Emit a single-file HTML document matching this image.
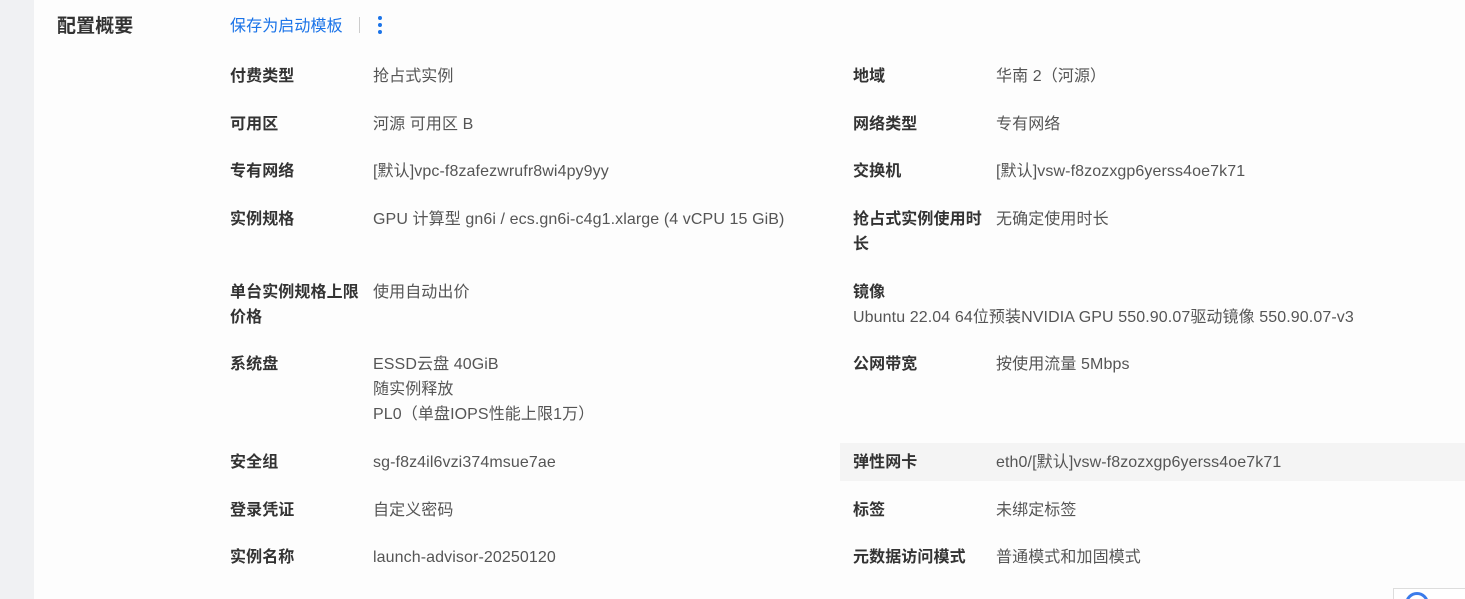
<!DOCTYPE html>
<html style="overflow:hidden"><head><meta charset="utf-8"><style>
html,body{overflow:hidden;height:599px}
body{margin:0;width:1465px;background:#fdfdfd;position:relative;font-family:"Liberation Sans","Noto Sans CJK SC",sans-serif;font-size:16px;color:#555}
.bar{position:absolute;left:0;top:0;width:34px;height:599px;background:#f0f1f3}
.t{position:absolute;white-space:nowrap;line-height:25px;margin-top:1px;letter-spacing:0.1px}
.l{font-weight:bold;color:#333}
.hl{position:absolute;left:840px;top:443px;width:625px;height:38px;background:#f4f4f4}
</style></head><body>
<div class="bar"></div>
<div class="hl"></div>
<div class="t l" style="left:57px;top:13px;font-size:19px">配置概要</div>
<div class="t" style="left:230px;top:13px;color:#1a73e8">保存为启动模板</div>
<div style="position:absolute;left:359px;top:17px;width:1px;height:16px;background:#ccc"></div>
<div style="position:absolute;left:378px;top:16px;width:4px;height:4px;border-radius:2px;background:#1a73e8;box-shadow:0 7px 0 #1a73e8,0 14px 0 #1a73e8"></div>

<div class="t l" style="left:230px;top:63px">付费类型</div><div class="t" style="left:373px;top:63px">抢占式实例</div>
<div class="t l" style="left:853px;top:63px">地域</div><div class="t" style="left:996px;top:63px">华南 2（河源）</div>

<div class="t l" style="left:230px;top:111px">可用区</div><div class="t" style="left:373px;top:111px">河源 可用区 B</div>
<div class="t l" style="left:853px;top:111px">网络类型</div><div class="t" style="left:996px;top:111px">专有网络</div>

<div class="t l" style="left:230px;top:158px">专有网络</div><div class="t" style="left:373px;top:158px">[默认]vpc-f8zafezwrufr8wi4py9yy</div>
<div class="t l" style="left:853px;top:158px">交换机</div><div class="t" style="left:996px;top:158px">[默认]vsw-f8zozxgp6yerss4oe7k71</div>

<div class="t l" style="left:230px;top:206px">实例规格</div><div class="t" style="left:373px;top:206px">GPU 计算型 gn6i / ecs.gn6i-c4g1.xlarge (4 vCPU 15 GiB)</div>
<div class="t l" style="left:853px;top:206px">抢占式实例使用时<br>长</div><div class="t" style="left:996px;top:206px">无确定使用时长</div>

<div class="t l" style="left:230px;top:279px">单台实例规格上限<br>价格</div><div class="t" style="left:373px;top:279px">使用自动出价</div>
<div class="t l" style="left:853px;top:279px">镜像</div><div class="t" style="left:853px;top:304px">Ubuntu 22.04 64位预装NVIDIA GPU 550.90.07驱动镜像 550.90.07-v3</div>

<div class="t l" style="left:230px;top:351px">系统盘</div><div class="t" style="left:373px;top:351px">ESSD云盘 40GiB<br>随实例释放<br>PL0（单盘IOPS性能上限1万）</div>
<div class="t l" style="left:853px;top:351px">公网带宽</div><div class="t" style="left:996px;top:351px">按使用流量 5Mbps</div>

<div class="t l" style="left:230px;top:449px">安全组</div><div class="t" style="left:373px;top:449px">sg-f8z4il6vzi374msue7ae</div>
<div class="t l" style="left:853px;top:449px">弹性网卡</div><div class="t" style="left:996px;top:449px">eth0/[默认]vsw-f8zozxgp6yerss4oe7k71</div>

<div class="t l" style="left:230px;top:497px">登录凭证</div><div class="t" style="left:373px;top:497px">自定义密码</div>
<div class="t l" style="left:853px;top:497px">标签</div><div class="t" style="left:996px;top:497px">未绑定标签</div>

<div class="t l" style="left:230px;top:544px">实例名称</div><div class="t" style="left:373px;top:544px">launch-advisor-20250120</div>
<div class="t l" style="left:853px;top:544px">元数据访问模式</div><div class="t" style="left:996px;top:544px">普通模式和加固模式</div>

<div style="position:absolute;left:1393px;top:588px;width:72px;height:11px;border:1px solid #ddd;border-bottom:none;background:#fff;overflow:hidden"><div style="position:absolute;left:11px;top:3px;width:24px;height:24px;border-radius:50%;border:3px solid #3b7bea;box-sizing:border-box"></div></div>
</body></html>
